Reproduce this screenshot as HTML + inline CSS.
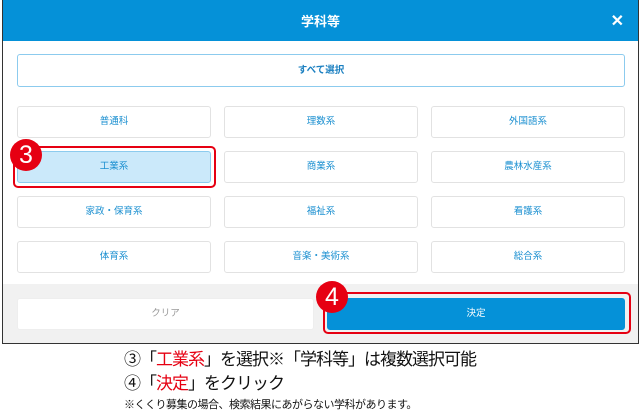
<!DOCTYPE html><html><head><meta charset="utf-8"><style>
body{margin:0;width:640px;height:413px;background:#fff;position:relative;overflow:hidden;font-family:"Liberation Sans","Noto Sans CJK JP",sans-serif}
.a{position:absolute;box-sizing:border-box}
.frame{left:2px;top:0;width:637px;height:344px;border:1px solid #333;border-top:none;background:#fff}
.hd{left:3px;top:0;width:635px;height:41px;background:#0591d8;color:#fff;font-size:13px;font-weight:bold;text-align:center;line-height:44px}
.b{background:#fff;border:1px solid #e2e2e2;border-radius:3px;color:#1a8fd0;font-size:9.5px;text-align:center;line-height:30px}
.ft{left:3px;top:284px;width:635px;height:59px;background:#f1f1f1}
.c{border-radius:50%;background:#e60012;color:#fff;font-size:25px;text-align:center;line-height:32px;width:32px;height:32px}
.t{left:124px;font-size:17px;letter-spacing:-1px;color:#111;white-space:nowrap}
.r{color:#e60012}
</style></head><body>
<div class="a frame"></div>
<div class="a hd">学科等<span style="position:absolute;right:14px;top:0;font-size:16px">✕</span></div>
<div class="a b" style="left:17px;top:54px;width:608px;height:33px;border-color:#8ccbee;font-weight:bold;line-height:31px;color:#1a7fc0">すべて選択</div>
<div class="a b" style="left:17px;top:106px;width:194px;height:32px">普通科</div>
<div class="a b" style="left:224px;top:106px;width:194px;height:32px">理数系</div>
<div class="a b" style="left:431px;top:106px;width:194px;height:32px">外国語系</div>
<div class="a b" style="left:17px;top:151px;width:194px;height:32px;background:#cbe9fa;border-color:#8ccbee">工業系</div>
<div class="a" style="left:13px;top:146px;width:203px;height:42px;border:2px solid #e60012;border-radius:5px"></div>
<div class="a b" style="left:224px;top:151px;width:194px;height:32px">商業系</div>
<div class="a b" style="left:431px;top:151px;width:194px;height:32px">農林水産系</div>
<div class="a b" style="left:17px;top:196px;width:194px;height:32px">家政・保育系</div>
<div class="a b" style="left:224px;top:196px;width:194px;height:32px">福祉系</div>
<div class="a b" style="left:431px;top:196px;width:194px;height:32px">看護系</div>
<div class="a b" style="left:17px;top:241px;width:194px;height:32px">体育系</div>
<div class="a b" style="left:224px;top:241px;width:194px;height:32px">音楽・美術系</div>
<div class="a b" style="left:431px;top:241px;width:194px;height:32px">総合系</div>
<div class="a ft"></div>
<div class="a b" style="left:17px;top:298px;width:297px;height:32px;color:#999;border-color:#eee">クリア</div>
<div class="a b" style="left:327px;top:298px;width:298px;height:32px;background:#0591d8;border-color:#0591d8;color:#fff">決定</div>
<div class="a" style="left:323px;top:292px;width:308px;height:42px;border:2px solid #e60012;border-radius:5px"></div>
<div class="a c" style="left:10px;top:139px">3</div>
<div class="a c" style="left:316px;top:281px">4</div>
<div class="a t" style="top:345px">③「<span class="r">工業系</span>」を選択※「学科等」は複数選択可能</div>
<div class="a t" style="top:369px">④「<span class="r">決定</span>」をクリック</div>
<div class="a t" style="top:396px;font-size:11px;letter-spacing:-0.5px">※くくり募集の場合、検索結果にあがらない学科があります。</div>
</body></html>
